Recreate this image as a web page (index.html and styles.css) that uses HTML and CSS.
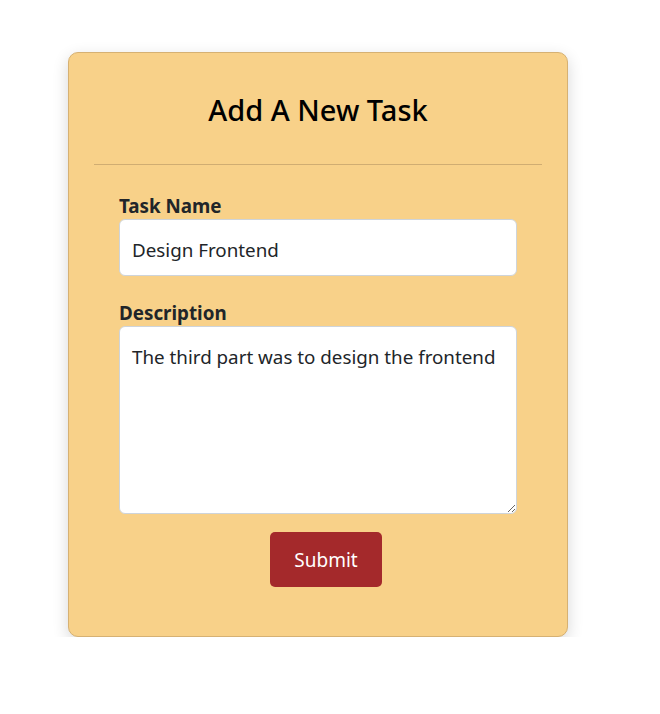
FILE: index.html
```html
<!DOCTYPE html>
<html>
<head>
<meta charset="utf-8">
<link rel="stylesheet" href="styles.css">
</head>
<body>
<div class="card">
  <h3 class="title">Add A New Task</h3>
  <hr class="divider">
  <form class="form">
    <div class="field">
      <label class="label" for="name">Task Name</label>
      <input class="input" id="name" type="text" value="Design Frontend">
    </div>
    <div class="field">
      <label class="label" for="desc">Description</label>
      <textarea class="textarea" id="desc">The third part was to design the frontend</textarea>
    </div>
    <div class="actions">
      <button class="btn" type="button">Submit</button>
    </div>
  </form>
</div>
</body>
</html>
```
FILE: styles.css
```css
html, body {
  margin: 0;
  padding: 0;
  background: #ffffff;
}
body {
  font-family: "Noto Sans", "Open Sans", sans-serif;
  color: #212529;
}
.card {
  box-sizing: border-box;
  width: 500px;
  height: 585px;
  margin: 52px 0 0 68px;
  background: #f8d189;
  border: 1px solid #d6b173;
  border-radius: 10px;
  box-shadow: 0 5px 16px rgba(0, 0, 0, 0.16);
  padding: 0 25px;
}
.title {
  margin: 0;
  padding-top: 39px;
  text-align: center;
  font-size: 29px;
  font-weight: 500;
  line-height: 36px;
  color: #000;
}
.divider {
  margin: 36px 0 0 0;
  border: 0;
  border-top: 1px solid #d0ad72;
  height: 0;
}
.form {
  display: flex;
  flex-direction: column;
  padding: 0 25px;
  margin-top: 25px;
}
.field {
  display: flex;
  flex-direction: column;
  margin-bottom: 21px;
}
.label {
  font-size: 18.8px;
  font-weight: 700;
  line-height: 28px;
  margin-top: 2px;
  margin-bottom: -1px;
  color: #212529;
}
.input, .textarea {
  box-sizing: border-box;
  width: 398px;
  font-family: "Noto Sans", "Open Sans", sans-serif;
  font-size: 18.8px;
  color: #212529;
  background: #fff;
  border: 1px solid #ced4da;
  border-radius: 6px;
  padding: 0 12px;
  outline: none;
}
.input {
  height: 57px;
  padding-top: 4px;
}
.textarea {
  height: 188px;
  padding-top: 16px;
  line-height: 28px;
  resize: vertical;
}
.actions {
  display: flex;
  justify-content: center;
  margin-top: -3px;
}
.btn {
  width: 112px;
  height: 55px;
  margin-left: 16px;
  background: #a4292b;
  color: #fff;
  border: 0;
  border-radius: 5px;
  font-family: "Noto Sans", "Open Sans", sans-serif;
  font-size: 19px;
}
```
